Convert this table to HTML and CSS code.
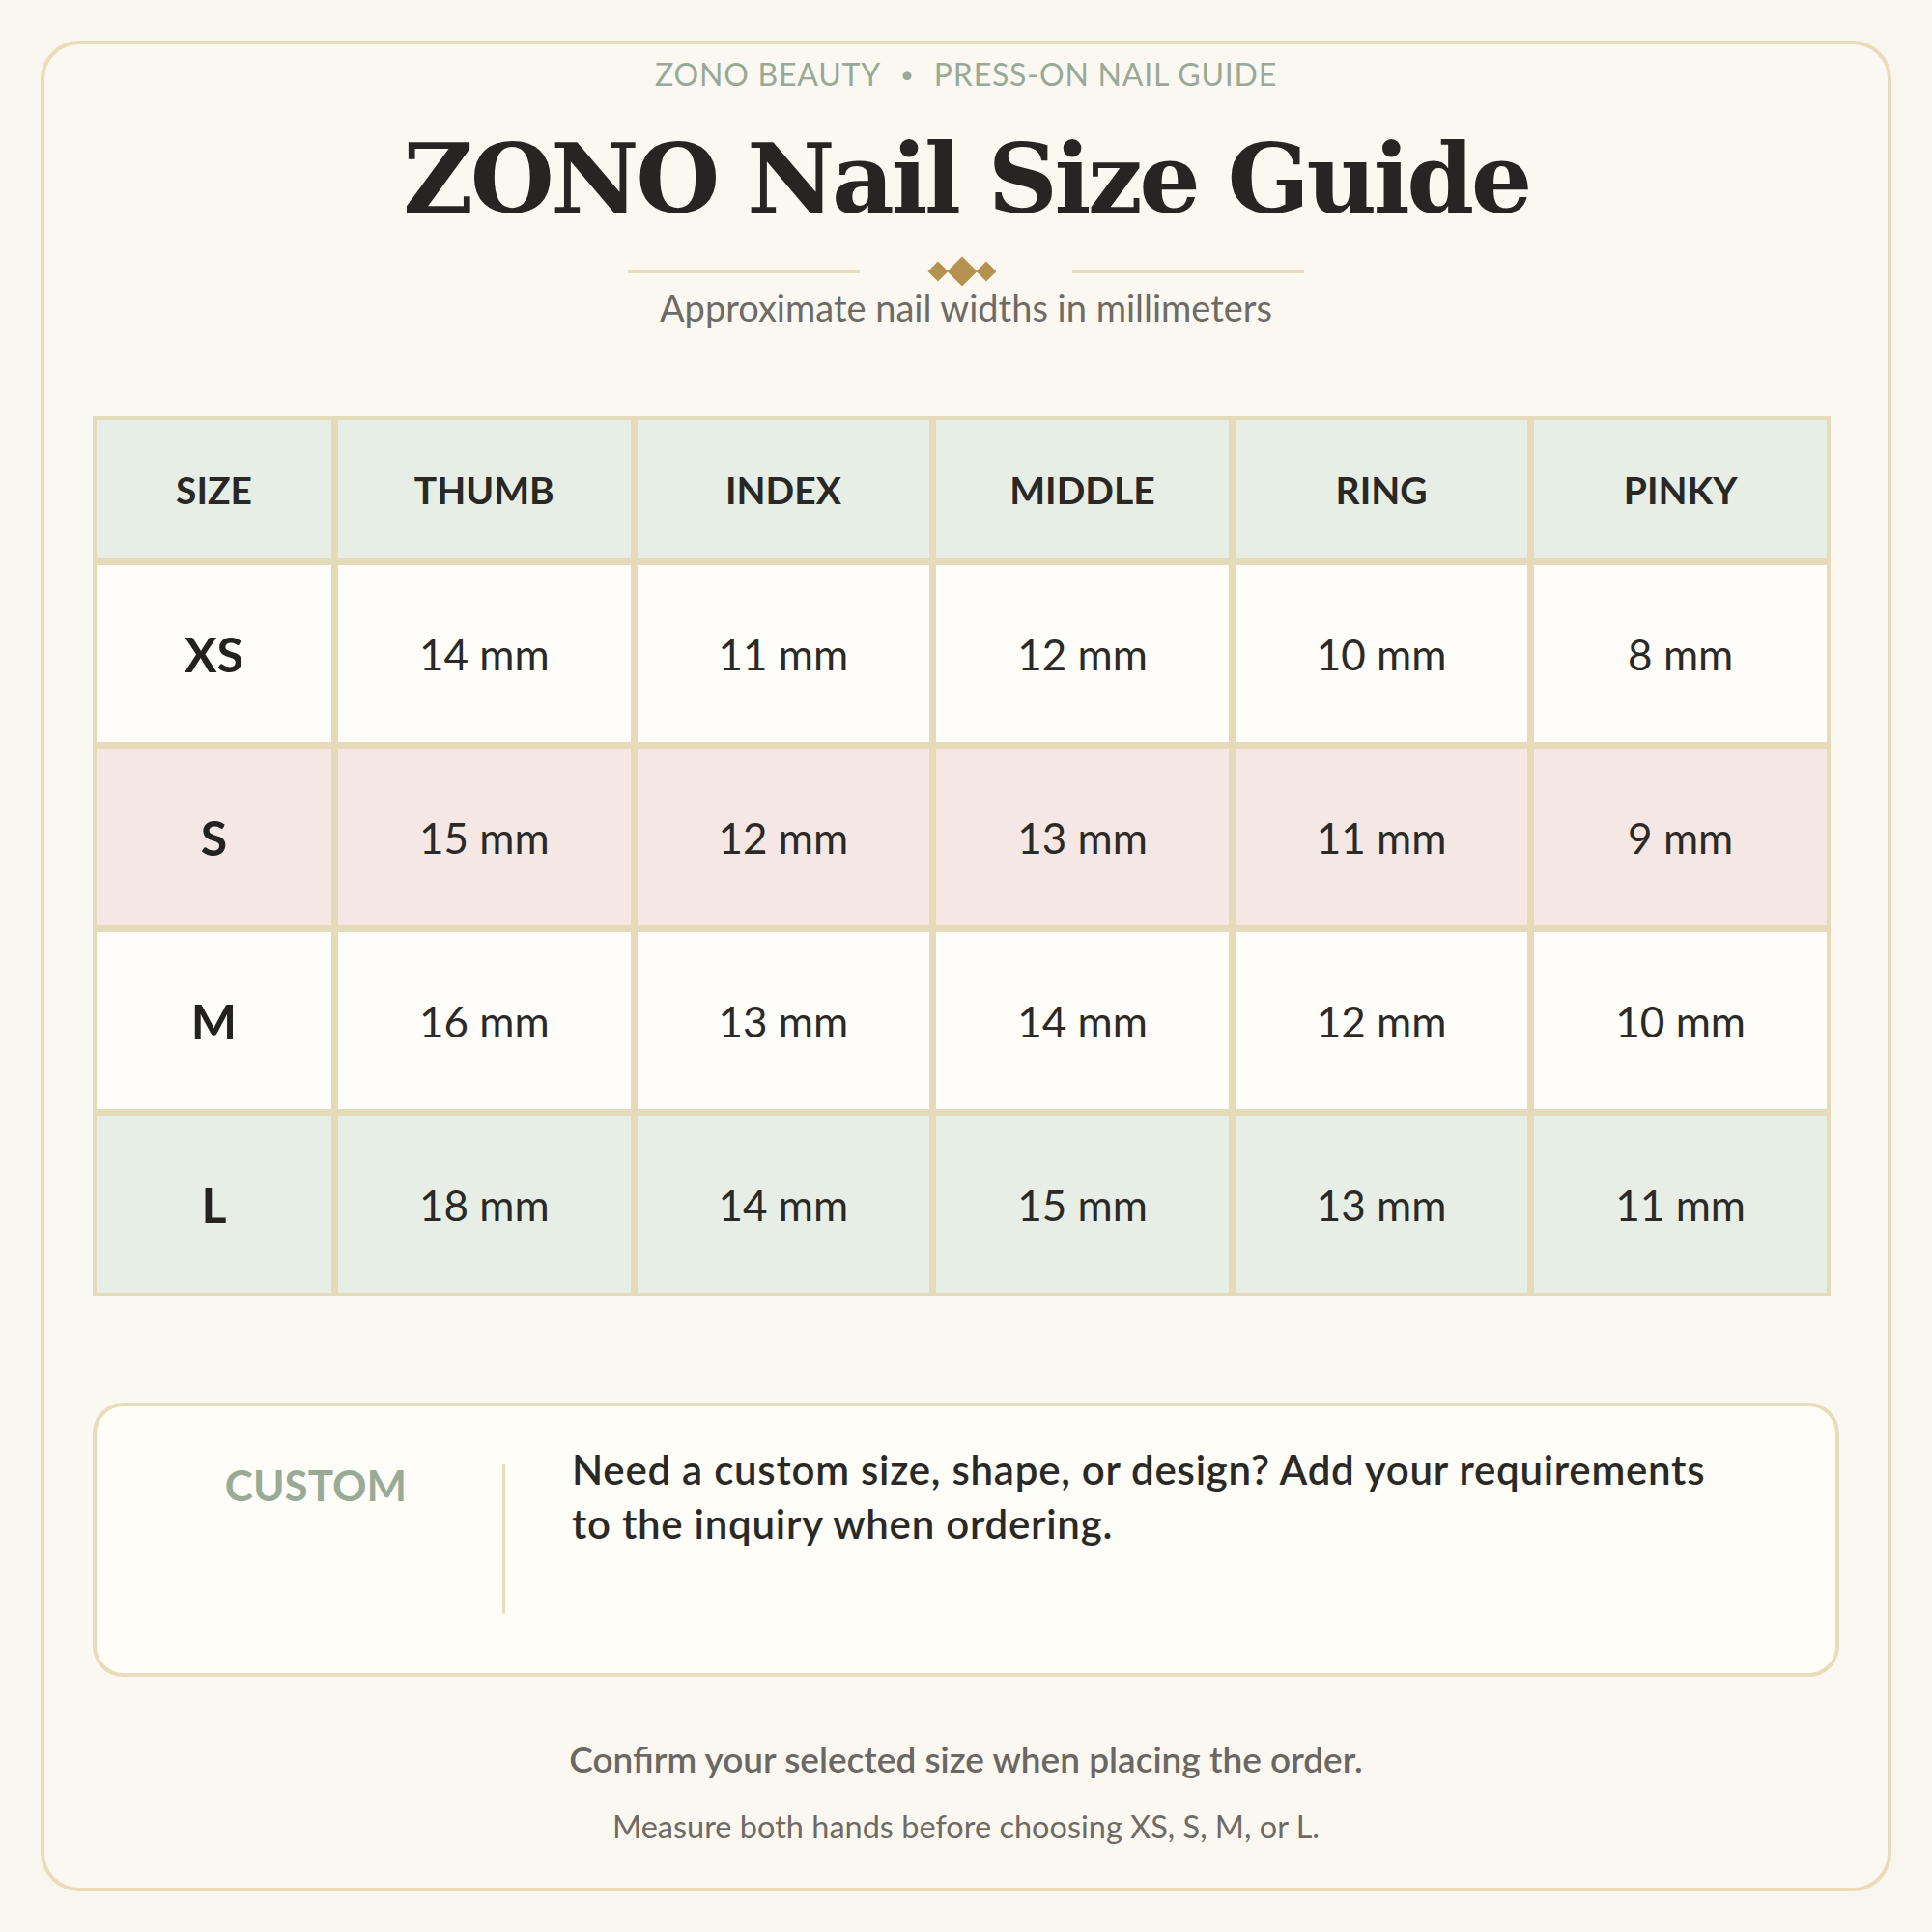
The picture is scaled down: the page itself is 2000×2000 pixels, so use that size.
FILE: index.html
```html
<!DOCTYPE html>
<html lang="en">
<head>
<meta charset="utf-8">
<title>ZONO Nail Size Guide</title>
<link rel="stylesheet" href="styles.css">
</head>
<body>
<main class="card">
  <header class="intro">
    <p class="eyebrow">ZONO BEAUTY<span class="dot">•</span>PRESS-ON NAIL GUIDE</p>
    <h1 class="title">ZONO Nail Size Guide</h1>
    <div class="ornament">
      <span class="rule"></span>
      <svg class="diamonds" width="72" height="32" viewBox="0 0 72 32" aria-hidden="true">
        <polygon points="11,5.5 21.5,16 11,26.5 0.5,16" />
        <polygon points="61,5.5 71.5,16 61,26.5 50.5,16" />
        <polygon points="36,0.5 51.5,16 36,31.5 20.5,16" />
      </svg>
      <span class="rule"></span>
    </div>
    <p class="subtitle">Approximate nail widths in millimeters</p>
  </header>

  <section class="chart">
    <div class="cell head">SIZE</div>
    <div class="cell head">THUMB</div>
    <div class="cell head">INDEX</div>
    <div class="cell head">MIDDLE</div>
    <div class="cell head">RING</div>
    <div class="cell head">PINKY</div>

    <div class="cell size row-light">XS</div>
    <div class="cell row-light">14 mm</div>
    <div class="cell row-light">11 mm</div>
    <div class="cell row-light">12 mm</div>
    <div class="cell row-light">10 mm</div>
    <div class="cell row-light">8 mm</div>

    <div class="cell size row-pink">S</div>
    <div class="cell row-pink">15 mm</div>
    <div class="cell row-pink">12 mm</div>
    <div class="cell row-pink">13 mm</div>
    <div class="cell row-pink">11 mm</div>
    <div class="cell row-pink">9 mm</div>

    <div class="cell size row-light">M</div>
    <div class="cell row-light">16 mm</div>
    <div class="cell row-light">13 mm</div>
    <div class="cell row-light">14 mm</div>
    <div class="cell row-light">12 mm</div>
    <div class="cell row-light">10 mm</div>

    <div class="cell size row-sage">L</div>
    <div class="cell row-sage">18 mm</div>
    <div class="cell row-sage">14 mm</div>
    <div class="cell row-sage">15 mm</div>
    <div class="cell row-sage">13 mm</div>
    <div class="cell row-sage">11 mm</div>
  </section>

  <section class="custom">
    <div class="custom-label">CUSTOM</div>
    <div class="custom-divider"></div>
    <p class="custom-text">Need a custom size, shape, or design? Add your requirements to the inquiry when ordering.</p>
  </section>

  <footer class="notes">
    <p class="note-main">Confirm your selected size when placing the order.</p>
    <p class="note-sub">Measure both hands before choosing XS, S, M, or L.</p>
  </footer>
</main>
</body>
</html>
```

FILE: styles.css
```css
* {
  box-sizing: border-box;
}

html, body {
  margin: 0;
  padding: 0;
}

body {
  width: 2000px;
  height: 2000px;
  padding: 42px;
  background: #f9f6ef;
  font-family: Lato, "Open Sans", sans-serif;
  color: #2a2925;
}

p, h1 {
  margin: 0;
}

.card {
  width: 1916px;
  height: 1916px;
  border: 4px solid #e8dcba;
  border-radius: 40px;
  background: #fbf8f2;
  padding: 15px 50px 0;
  display: flex;
  flex-direction: column;
}

.intro {
  display: flex;
  flex-direction: column;
  align-items: center;
}

.eyebrow {
  font-size: 32px;
  line-height: 1;
  color: #98a997;
  letter-spacing: 0.8px;
}

.eyebrow .dot {
  margin: 0 20px;
  font-size: 24px;
  vertical-align: 3px;
}

.title {
  margin-top: 42px;
  font-family: "DejaVu Serif", serif;
  font-weight: 700;
  font-size: 100px;
  line-height: 1;
  color: #262521;
  letter-spacing: -3.5px;
}

.ornament {
  margin-top: 30px;
  height: 32px;
  display: flex;
  align-items: center;
  gap: 74px;
}

.rule {
  width: 240px;
  height: 3px;
  background: #e8dcba;
}

.diamonds {
  transform: translateX(-4px);
}

.diamonds polygon {
  fill: #b5924f;
}

.subtitle {
  margin-top: 2px;
  font-size: 38px;
  line-height: 1;
  color: #6e6a64;
}

.chart {
  margin-top: 94px;
  width: 1799px;
  display: grid;
  grid-template-columns: 243px repeat(5, 1fr);
  grid-template-rows: 143px repeat(4, 183px);
  gap: 7px;
  padding: 4px;
  background: #e6dbb8;
}

.cell {
  display: flex;
  align-items: center;
  justify-content: center;
  font-size: 44px;
  color: #2b2a26;
}

.cell.head {
  background: #e7eee6;
  font-size: 39px;
  font-weight: 700;
  color: #2a2824;
}

.cell.size {
  font-size: 50px;
  font-weight: 700;
  color: #232220;
}

.row-light {
  background: #fefdf9;
}

.row-pink {
  background: #f5e7e3;
}

.row-sage {
  background: #e7eee6;
}

.custom {
  margin-top: 110px;
  width: 1808px;
  border: 4px solid #e8dcba;
  border-radius: 32px;
  background: #fefdf8;
  padding: 37px 0 61px 77px;
  display: flex;
  align-items: flex-start;
}

.custom-label {
  width: 300px;
  margin-top: 22px;
  text-align: center;
  font-size: 44px;
  line-height: 1;
  font-weight: 700;
  color: #99ab97;
}

.custom-divider {
  margin-top: 23px;
  margin-left: 43px;
  width: 3px;
  height: 155px;
  background: #e8dcba;
}

.custom-text {
  margin-left: 69px;
  width: 1200px;
  font-size: 42px;
  line-height: 56px;
  font-weight: 600;
  letter-spacing: 0.75px;
  color: #2a2925;
}

.notes {
  margin-top: 66px;
  display: flex;
  flex-direction: column;
  align-items: center;
}

.note-main {
  font-size: 37px;
  line-height: 1;
  font-weight: 600;
  color: #6b6762;
}

.note-sub {
  margin-top: 36px;
  font-size: 32.5px;
  line-height: 1;
  color: #6e6a64;
}
```
